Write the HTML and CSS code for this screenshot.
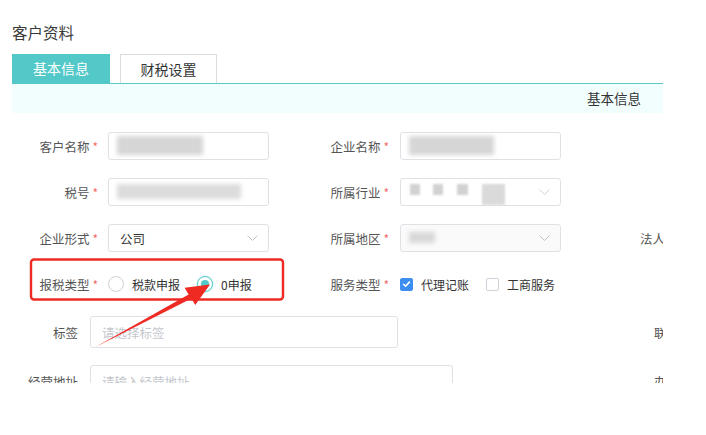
FILE: index.html
```html
<!DOCTYPE html>
<html lang="zh-CN">
<head>
<meta charset="utf-8">
<title>客户资料</title>
<link rel="stylesheet" href="styles.css">
</head>
<body>
<div class="page">
  <div class="title">客户资料</div>
  <div class="tabs">
    <div class="tab active">基本信息</div>
    <div class="tab">财税设置</div>
  </div>
  <div class="band">基本信息</div>
  <div class="form">
    <div class="row">
      <div class="lbl w1">客户名称<span class="req">*</span></div>
      <div class="ctl c1"><span class="blur b-name"></span></div>
      <div class="lbl w2">企业名称<span class="req">*</span></div>
      <div class="ctl c1"><span class="blur b-comp"></span></div>
    </div>
    <div class="row">
      <div class="lbl w1">税号<span class="req">*</span></div>
      <div class="ctl c1"><span class="blur b-tax"></span></div>
      <div class="lbl w2">所属行业<span class="req">*</span></div>
      <div class="ctl c1 select">
        <span class="sq s1"></span><span class="sq s2"></span><span class="sq s3"></span><span class="sq s4"></span>
        <svg class="chev" width="11" height="7" viewBox="0 0 11 7"><polyline points="0.5,0.5 5.5,5.5 10.5,0.5" fill="none" stroke="#d0d3d9" stroke-width="1"/></svg>
      </div>
    </div>
    <div class="row">
      <div class="lbl w1">企业形式<span class="req">*</span></div>
      <div class="ctl c1 select"><span class="val">公司</span>
        <svg class="chev" width="11" height="7" viewBox="0 0 11 7"><polyline points="0.5,0.5 5.5,5.5 10.5,0.5" fill="none" stroke="#c0c4cc" stroke-width="1"/></svg>
      </div>
      <div class="lbl w2">所属地区<span class="req">*</span></div>
      <div class="ctl c1 select dim"><span class="blur b-area"></span>
        <svg class="chev" width="11" height="7" viewBox="0 0 11 7"><polyline points="0.5,0.5 5.5,5.5 10.5,0.5" fill="none" stroke="#c0c4cc" stroke-width="1"/></svg>
      </div>
      <div class="lbl far">法人代表</div>
    </div>
    <div class="row">
      <div class="lbl w1">报税类型<span class="req">*</span></div>
      <div class="opts c1w">
        <span class="radio"></span><span class="opt">税款申报</span>
        <span class="radio on"></span><span class="opt">0申报</span>
      </div>
      <div class="lbl w2">服务类型<span class="req">*</span></div>
      <div class="opts">
        <span class="check on"><svg width="9" height="8" viewBox="0 0 9 8"><polyline points="1.2,4 3.6,6.2 7.8,1.6" fill="none" stroke="#fff" stroke-width="1.6"/></svg></span><span class="opt">代理记账</span>
        <span class="check"></span><span class="opt">工商服务</span>
      </div>
    </div>
    <div class="row tall">
      <div class="lbl w4">标签</div>
      <div class="ctl c2"><span class="ph">请选择标签</span></div>
      <div class="lbl far2">联系人</div>
    </div>
    <div class="row tall last">
      <div class="lbl w4">经营地址</div>
      <div class="ctl c3"><span class="ph">请输入经营地址</span></div>
      <div class="lbl far3">办公地址</div>
    </div>
  </div>
</div>
<svg class="annot" width="706" height="435" viewBox="0 0 706 435">
  <rect x="31" y="259.5" width="252" height="40" rx="3" fill="none" stroke="#ee2a22" stroke-width="2.4"/>
  <polygon points="95.5,347 188.6,294.6 184.6,287.8 210,284.5 195.2,305 191.4,298.6" fill="#ee2a22"/>
</svg>
</body>
</html>
```

FILE: styles.css
```css
* { box-sizing: border-box; }
html, body { margin: 0; padding: 0; background: #fff; }
body {
  font-family: "Noto Sans CJK SC", "Noto Sans", sans-serif;
  color: #333;
  position: relative;
  width: 706px;
  height: 435px;
  overflow: hidden;
}
.page {
  margin-left: 12px;
  width: 651px;
  height: 383px;
  overflow: hidden;
}
.title {
  padding-top: 22px;
  font-size: 15.5px;
  line-height: 20px;
  color: #3a3a3a;
}
.tabs {
  margin-top: 11px;
  height: 30px;
  display: flex;
  align-items: flex-end;
}
.tab {
  width: 97px;
  height: 29px;
  margin-left: 10px;
  border: 1px solid #dcdcdc;
  border-bottom: none;
  background: #fff;
  font-size: 14px;
  line-height: 28px;
  text-align: center;
  color: #333;
}
.tab.active {
  width: 98px;
  margin-left: 0;
  border: none;
  background: #52c8c8;
  color: #fff;
  line-height: 29px;
}
.band {
  border-top: 1px solid #58c9c9;
  height: 30px;
  background: #f2fdfe;
  text-align: right;
  padding-right: 22px;
  font-size: 13.5px;
  line-height: 29px;
  color: #333;
}
.form {
  padding-top: 19px;
  display: flex;
  flex-direction: column;
  gap: 18px;
}
.row {
  display: flex;
  align-items: center;
  height: 28px;
  white-space: nowrap;
}
.row.tall { height: 32px; }
.row.last { margin-top: -1px; }
.lbl {
  font-size: 12.5px;
  color: #555;
  text-align: right;
  flex: none;
}
.req {
  color: #f56c6c;
  margin-left: 3px;
  font-size: 12px;
}
.w1 { width: 86px; margin-right: 10px; }
.w2 { width: 120px; margin-right: 11px; }
.w4 { width: 66px; margin-right: 12px; }
.far { text-align: left; margin-left: 79px; }
.far2 { text-align: left; margin-left: 256px; }
.far3 { text-align: left; margin-left: 201px; }
.ctl {
  position: relative;
  flex: none;
  height: 28px;
  border: 1px solid #dfe1e6;
  border-radius: 3px;
  background: #fff;
  display: flex;
  align-items: center;
  padding: 0 11px;
  font-size: 12.5px;
}
.c1 { width: 161px; }
.c1w { width: 161px; flex: none; }
.c2 { width: 308px; height: 32px; }
.c3 { width: 363px; height: 32px; }
.select.dim { background: #fafafa; }
.val { color: #333; }
.ph { color: #c4c7cd; }
.chev {
  position: absolute;
  right: 10px;
  top: 10px;
}
.blur {
  position: absolute;
  background: #d6d6d6;
  filter: blur(2px);
}
.b-name { left: 8px; top: 3px; width: 86px; height: 19px; }
.b-comp { left: 8px; top: 3px; width: 85px; height: 19px; }
.b-tax { left: 8px; top: 5px; width: 124px; height: 15px; background: #dcdcdc; }
.b-area { left: 8px; top: 7px; width: 26px; height: 11px; background: #d8d8d8; }
.sq {
  position: absolute;
  top: 5px;
  height: 11px;
  background: #d2d2d2;
  filter: blur(1px);
}
.s1 { left: 9px; width: 10px; }
.s2 { left: 32px; width: 10px; }
.s3 { left: 56px; width: 11px; }
.s4 { left: 81px; width: 23px; height: 21px; background: #dadada; }
.opts {
  display: flex;
  align-items: center;
  font-size: 12px;
  color: #333;
}
.radio {
  width: 16px;
  height: 16px;
  border: 1px solid #cfd2d8;
  border-radius: 50%;
  background: #fff;
  margin-right: 8px;
  flex: none;
}
.radio.on {
  border: 1.5px solid #52c8c8;
  display: flex;
  align-items: center;
  justify-content: center;
  box-shadow: 0 0 0 1px #dff5f5;
}
.radio.on::after {
  content: "";
  width: 8px;
  height: 8px;
  border-radius: 50%;
  background: #52c8c8;
}
.opt { margin-right: 17px; }
.check {
  width: 13px;
  height: 13px;
  border: 1px solid #cfd2d8;
  border-radius: 2px;
  background: #fff;
  margin-right: 8px;
  flex: none;
  display: flex;
  align-items: center;
  justify-content: center;
}
.check.on {
  background: #3d8ef0;
  border-color: #3d8ef0;
}
.annot {
  position: absolute;
  left: 0;
  top: 0;
  pointer-events: none;
}
```
